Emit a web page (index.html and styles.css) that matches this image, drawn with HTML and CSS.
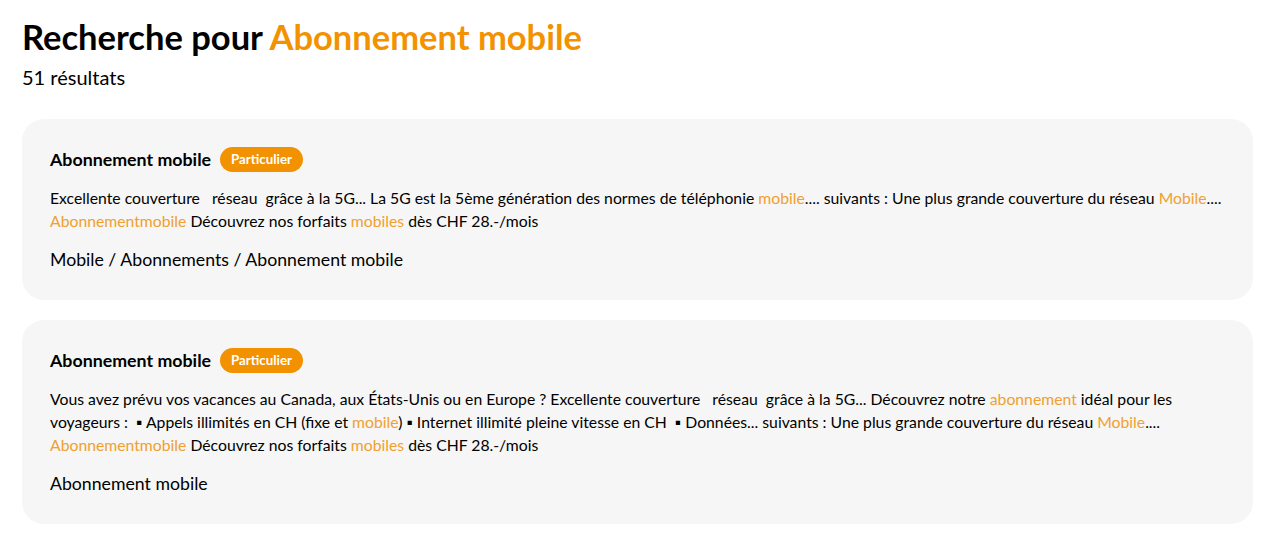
FILE: index.html
```html
<!DOCTYPE html>
<html>
<head>
    <title>Recherche</title>
    <link rel="stylesheet" href="styles.css">
</head>
<body>
    <div class="page">
        <h1>Recherche pour <span class="term">Abonnement mobile</span></h1>
        <p class="count">51 résultats</p>

        <div class="results">
            <div class="result">
                <div class="result-head">
                    <h3>Abonnement mobile</h3>
                    <span class="badge">Particulier</span>
                </div>
                <p class="excerpt">Excellente couverture &nbsp; réseau &nbsp;grâce à la 5G... La 5G est la 5ème génération des normes de téléphonie <em>mobile</em>.... suivants : Une plus grande couverture du réseau <em>Mobile</em>.... <em>Abonnementmobile</em> Découvrez nos forfaits <em>mobiles</em> dès CHF 28.-/mois</p>
                <p class="path">Mobile / Abonnements / Abonnement mobile</p>
            </div>
            <div class="result">
                <div class="result-head">
                    <h3>Abonnement mobile</h3>
                    <span class="badge">Particulier</span>
                </div>
                <p class="excerpt">Vous avez prévu vos vacances au Canada, aux États-Unis ou en Europe ? Excellente couverture &nbsp; réseau &nbsp;grâce à la 5G... Découvrez notre <em>abonnement</em> idéal pour les voyageurs : &nbsp;▪ Appels illimités en CH (fixe et <em>mobile</em>) ▪ Internet illimité pleine vitesse en CH &nbsp;▪ Données... suivants : Une plus grande couverture du réseau <em>Mobile</em>.... <em>Abonnementmobile</em> Découvrez nos forfaits <em>mobiles</em> dès CHF 28.-/mois</p>
                <p class="path">Abonnement mobile</p>
            </div>
        </div>
    </div>
</body>
</html>
```

FILE: styles.css
```css
body {
    font-family: "Lato", "Liberation Sans", sans-serif;
    margin: 0;
    background: white;
    color: #000;
}
.page {
    padding: 17px 27px 0 22px;
}
h1 {
    font-size: 34.5px;
    font-weight: bold;
    margin: 0;
    line-height: 40px;
}
.term {
    color: #f39200;
}
.count {
    font-size: 20px;
    margin: 8px 0 0;
    line-height: 24px;
}
.results {
    margin-top: 30px;
    display: flex;
    flex-direction: column;
    gap: 20px;
}
.result {
    background: #f6f6f6;
    border-radius: 22px;
    padding: 28px 28px 28px;
}
.result-head {
    display: flex;
    align-items: center;
    gap: 9px;
}
.result h3 {
    font-size: 17.8px;
    margin: 0;
    line-height: 25px;
}
.badge {
    background: #f39200;
    color: white;
    font-size: 13.3px;
    font-weight: bold;
    padding: 0 11px;
    line-height: 25px;
    border-radius: 13px;
}
.excerpt {
    font-size: 15.75px;
    line-height: 23px;
    margin: 14px 0 0;
}
.excerpt em {
    font-style: normal;
    color: #f0a030;
}
.path {
    font-size: 17.7px;
    line-height: 24px;
    margin: 16px 0 0;
}
```
